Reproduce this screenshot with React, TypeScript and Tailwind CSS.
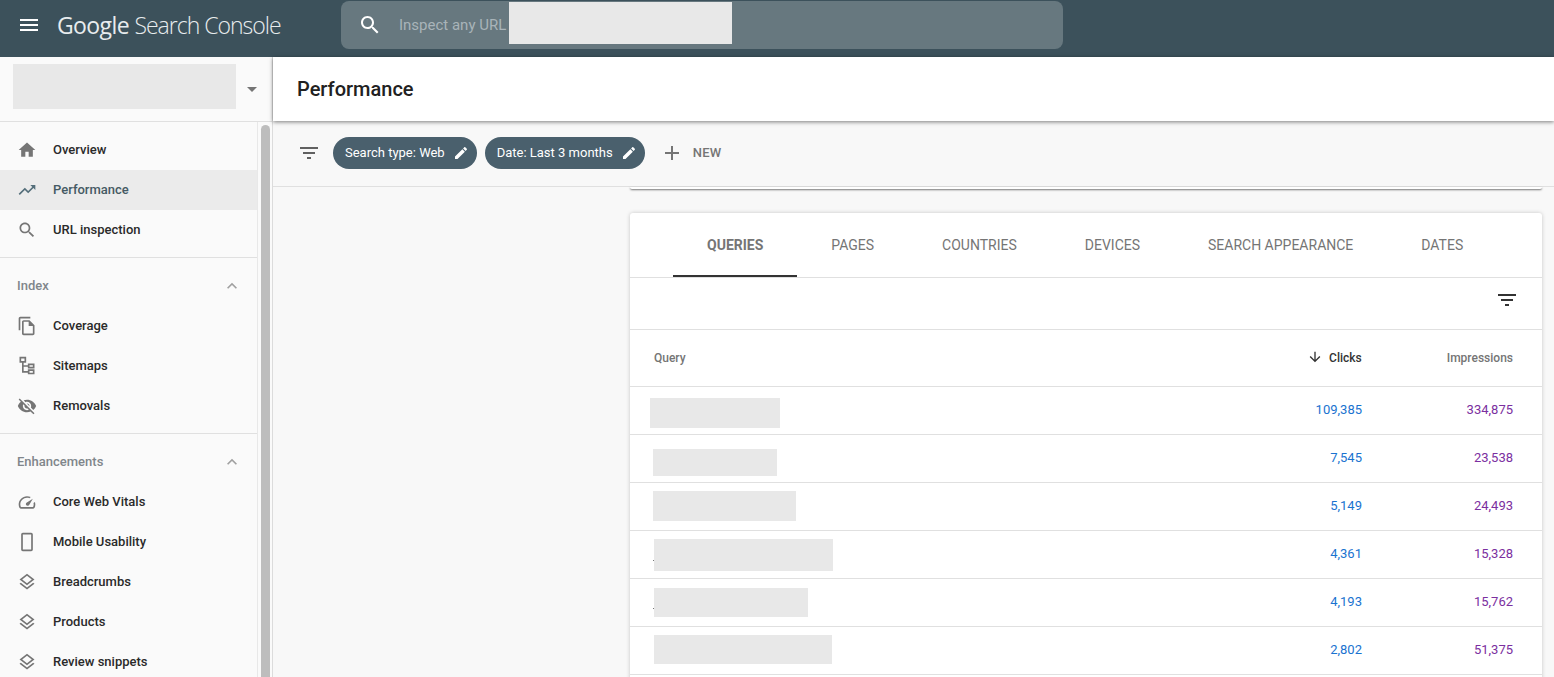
import React from 'react'

const P = {
  menu: 'M3 18h18v-2H3v2zm0-5h18v-2H3v2zm0-7v2h18V6H3z',
  search: 'M15.5 14h-.79l-.28-.27C15.41 12.59 16 11.11 16 9.5 16 5.91 13.09 3 9.5 3S3 5.91 3 9.5 5.91 16 9.5 16c1.61 0 3.09-.59 4.23-1.57l.27.28v.79l5 4.99L20.49 19l-4.99-5zm-6 0C7.01 14 5 11.99 5 9.5S7.01 5 9.5 5 14 7.01 14 9.5 11.99 14 9.5 14z',
  home: 'M10 20v-6h4v6h5v-8h3L12 3 2 12h3v8z',
  trend: 'M16 6l2.29 2.29-4.88 4.88-4-4L2 16.59 3.41 18l6-6 4 4 6.3-6.29L22 12V6z',
  filter: 'M10 18h4v-2h-4v2zM3 6v2h18V6H3zm3 7h12v-2H6v2z',
  edit: 'M3 17.25V21h3.75L17.81 9.94l-3.75-3.75L3 17.25zM20.71 7.04c.39-.39.39-1.02 0-1.41l-2.34-2.34c-.39-.39-1.02-.39-1.41 0l-1.83 1.83 3.75 3.75 1.83-1.83z',
  add: 'M19 13h-6v6h-2v-6H5v-2h6V5h2v6h6v2z',
  less: 'M12 8l-6 6 1.41 1.41L12 10.83l4.59 4.58L18 14z',
  copy: 'M16 1H4c-1.1 0-2 .9-2 2v14h2V3h12V1zm-1 4H8c-1.1 0-1.99.9-1.99 2L6 21c0 1.1.89 2 1.99 2H19c1.1 0 2-.9 2-2V11l-6-6zM8 21V7h6v5h5v9H8z',
  sitemap: 'M3 1h8v7H8v3h5V9h8v6h-8v-2H8v5h5v-2h8v6h-8v-2H6V8H3V1zM5 3v3h4V3H5zM15 11v2h4v-2h-4zM15 18v2h4v-2h-4z',
  eyeOff: 'M12 7c2.76 0 5 2.24 5 5 0 .65-.13 1.26-.36 1.83l2.92 2.92c1.51-1.26 2.7-2.89 3.43-4.75-1.73-4.39-6-7.5-11-7.5-1.4 0-2.74.25-3.98.7l2.16 2.16C10.74 7.13 11.35 7 12 7zM2 4.27l2.28 2.28.46.46C3.08 8.3 1.78 10.02 1 12c1.73 4.39 6 7.5 11 7.5 1.55 0 3.03-.3 4.38-.84l.42.42L19.73 22 21 20.73 3.27 3 2 4.27zM7.53 9.8l1.55 1.55c-.05.21-.08.43-.08.65 0 1.66 1.34 3 3 3 .22 0 .44-.03.65-.08l1.55 1.55c-.67.33-1.41.53-2.2.53-2.76 0-5-2.24-5-5 0-.79.2-1.53.53-2.2zm4.31-.78l3.15 3.15.02-.16c0-1.66-1.34-3-3-3l-.17.01z',
  gauge: 'M12 5C6.5 5 2 9.5 2 15c0 1.5.3 2.8.9 4 .3.6.9 1 1.6 1h15c.7 0 1.3-.4 1.6-1 .6-1.2.9-2.5.9-4 0-1-.2-2-.5-3l-1.7 1.1c.1.6.2 1.2.2 1.9 0 1.2-.3 2.2-.7 3H4.7c-.4-.8-.7-1.8-.7-3 0-4.4 3.6-8 8-8 1 0 2 .2 2.9.5L16.5 6c-1.4-.6-2.9-1-4.5-1zm7 3l-7.2 4.6c-1.2.7-1.5 2-.9 3 .6 1 2 1.3 3 .6.3-.2.5-.4.7-.7L19 8z',
  phone: 'M17 1.01 7 1C5.9 1 5 1.9 5 3v18c0 1.1.9 2 2 2h10c1.1 0 2-.9 2-2V3c0-1.1-.9-1.99-2-1.99zM17 21H7V3h10v18z',
  layers: 'M11.99 18.54l-7.37-5.73L3 14.07l9 7 9-7-1.63-1.27-7.38 5.74zM12 16l7.36-5.73L21 9l-9-7-9 7 1.63 1.27L12 16zm0-11.47L17.74 9 12 13.47 6.26 9 12 4.53z',
  down: 'M20 12l-1.41-1.41L13 16.17V4h-2v12.17l-5.58-5.6L4 12l8 8 8-8z',
}

function Icon({ d, className }: { d: string; className?: string }) {
  return (
    <svg viewBox="0 0 24 24" className={className} fill="currentColor" aria-hidden="true">
      <path d={d} />
    </svg>
  )
}

function NavItem({ icon, label, active }: { icon: string; label: string; active?: boolean }) {
  return (
    <div className={`h-10 flex items-center pl-[15px] ${active ? 'bg-[#ebebeb] text-[#455a64]' : 'text-[#2a2a2a]'}`}>
      <Icon d={icon} className={`w-6 h-6 p-[2px] ${active ? 'text-[#546e7a]' : 'text-[#757575]'}`} />
      <span className="ml-[14px] text-[13px] font-medium">{label}</span>
    </div>
  )
}

function NavHeader({ label }: { label: string }) {
  return (
    <div className="h-[48px] pt-2 flex items-center justify-between pl-[17px] pr-[13px] text-[13px] font-medium text-[#80868b]">
      <span>{label}</span>
      <Icon d={P.less} className="w-[24px] h-[24px] p-[2px] text-[#a0a0a0]" />
    </div>
  )
}

function Chip({ label }: { label: string }) {
  return (
    <div className="h-8 flex items-center rounded-full bg-[#4a606d] text-white pl-3 pr-2 text-[13px]">
      <span>{label}</span>
      <Icon d={P.edit} className="w-4 h-4 ml-2" />
    </div>
  )
}

const tabs = ['QUERIES', 'PAGES', 'COUNTRIES', 'DEVICES', 'SEARCH APPEARANCE', 'DATES']

const rows = [
  { box: 'ml-[20px] mt-[11px] w-[130px] h-[30px]', clicks: '109,385', imp: '334,875' },
  { box: 'ml-[23px] mt-[14px] w-[124px] h-[27px]', clicks: '7,545', imp: '23,538' },
  { box: 'ml-[23px] mt-[8px] w-[143px] h-[30px]', clicks: '5,149', imp: '24,493' },
  { box: 'mt-[8px] w-[179px] h-[32px]', clicks: '4,361', imp: '15,328', dot: true },
  { box: 'mt-[9px] w-[154px] h-[29px]', clicks: '4,193', imp: '15,762', dot: true },
  { box: 'ml-[24px] mt-[8px] w-[178px] h-[29px]', clicks: '2,802', imp: '51,375' },
]

export default function App() {
  return (
    <div className="h-[677px] overflow-hidden flex flex-col bg-[#f8f8f8] font-['Roboto',sans-serif]">
      {/* top bar */}
      <header className="h-[57px] shrink-0 bg-[#3c515b] flex items-start">
        <Icon d={P.menu} className="w-6 h-6 ml-[17px] mt-[13px] text-white" />
        <div className="ml-[16px] mt-[9px] w-[230px] text-[23px] leading-[32px] tracking-[-0.6px] text-[#e8ecee] font-['Open_Sans',sans-serif] whitespace-nowrap">
          <span>Google</span> <span className="font-light tracking-[-1px]">Search Console</span>
        </div>
        <div className="ml-[54px] mt-[1px] w-[722px] h-[48px] rounded-lg bg-[#67787f] flex items-start">
          <Icon d={P.search} className="w-6 h-6 ml-[17px] mt-[12px] text-white" />
          <span className="ml-[17px] mt-[12px] text-[15px] leading-6 text-[#a9b4b9] whitespace-nowrap">Inspect any URL</span>
          <div className="ml-[3px] mt-[1px] w-[223px] h-[42px] bg-[#e8e8e8]" />
        </div>
      </header>

      <div className="flex-1 flex min-h-0">
        {/* sidebar */}
        <aside className="w-[273px] shrink-0 bg-[#fafafa] border-r border-[#dcdcdc] flex flex-col">
          <div className="h-[65px] shrink-0 border-b border-[#e0e0e0] flex items-start">
            <div className="ml-[13px] mt-[7px] w-[223px] h-[45px] bg-[#e8e8e8]" />
            <div className="ml-[11px] mt-[30px] w-0 h-0 border-x-[5px] border-x-transparent border-t-[5px] border-t-[#757575]" />
          </div>
          <div className="flex-1 flex min-h-0">
            <nav className="w-[258px] shrink-0 border-r border-[#e8e8e8] pt-2">
              <div className="border-b border-[#e0e0e0] pb-[7px]">
                <NavItem icon={P.home} label="Overview" />
                <NavItem icon={P.trend} label="Performance" active />
                <NavItem icon={P.search} label="URL inspection" />
              </div>
              <div className="border-b border-[#e0e0e0] pb-[7px]">
                <NavHeader label="Index" />
                <NavItem icon={P.copy} label="Coverage" />
                <NavItem icon={P.sitemap} label="Sitemaps" />
                <NavItem icon={P.eyeOff} label="Removals" />
              </div>
              <NavHeader label="Enhancements" />
              <NavItem icon={P.gauge} label="Core Web Vitals" />
              <NavItem icon={P.phone} label="Mobile Usability" />
              <NavItem icon={P.layers} label="Breadcrumbs" />
              <NavItem icon={P.layers} label="Products" />
              <NavItem icon={P.layers} label="Review snippets" />
            </nav>
            <div className="flex-1 pt-[3px] pl-[3px]">
              <div className="w-[9px] h-full rounded-t-[5px] bg-[#bdbdbd]" />
            </div>
          </div>
        </aside>

        {/* main */}
        <main className="flex-1 min-w-0 flex flex-col">
          <div className="relative z-10 h-[64px] shrink-0 bg-white shadow-[0_1px_4px_rgba(0,0,0,0.5)] flex items-center pl-6">
            <h1 className="text-[20px] font-medium text-[#212121]">Performance</h1>
          </div>
          <div className="h-[66px] shrink-0 border-b border-[#e0e0e0] flex items-center pl-6 pb-[1px]">
            <Icon d={P.filter} className="w-6 h-6 text-[#616161]" />
            <div className="ml-3 flex gap-2">
              <Chip label="Search type: Web" />
              <Chip label="Date: Last 3 months" />
            </div>
            <Icon d={P.add} className="w-6 h-6 ml-[15px] text-[#757575]" />
            <span className="ml-[9px] text-[13px] font-medium text-[#757575] tracking-[0.2px]">NEW</span>
          </div>

          <div className="flex-1 min-h-0 pl-[357px] pr-3">
            {/* bottom edge of the card above */}
            <div className="h-[2px] rounded-b-sm bg-white shadow-[0_1px_2px_rgba(0,0,0,0.55)]" />
            <section className="mt-[24px] rounded-t-[3px] bg-white shadow-[0_0_4px_rgba(0,0,0,0.2)]">
              <div className="h-[65px] border-b border-[#e0e0e0] flex pl-[43px]">
                {tabs.map((t, i) => (
                  <div
                    key={t}
                    className={`h-[64px] px-[34px] flex items-center text-[14px] whitespace-nowrap text-[#757575] ${i === 0 ? 'font-bold border-b-2 border-[#333333] pt-[2px]' : ''}`}
                  >
                    {t}
                  </div>
                ))}
              </div>
              <div className="h-[52px] border-b border-[#e0e0e0] flex items-start justify-end pr-[23px] pt-[10px]">
                <Icon d={P.filter} className="w-6 h-6 text-[#333333]" />
              </div>
              <div className="h-[57px] border-b border-[#e0e0e0] flex items-center text-[12px] font-medium text-[#757575]">
                <span className="ml-6 flex-1">Query</span>
                <Icon d={P.down} className="w-4 h-4 mr-[6px] mb-[2px] text-[#333333]" />
                <span className="text-[#333333]">Clicks</span>
                <span className="ml-[85px] mr-[29px]">Impressions</span>
              </div>
              {rows.map((r) => (
                <div key={r.clicks} className="h-12 border-b border-[#e0e0e0] flex items-start text-[13px]">
                  {r.dot && <div className="ml-[23px] mt-[29px] w-px h-px bg-[#777777]" />}
                  <div className={`${r.box} bg-[#e8e8e8]`} />
                  <span className="ml-auto self-center pb-[2px] text-[#1a73d0]">{r.clicks}</span>
                  <span className="w-[180px] pr-[29px] pb-[2px] text-right self-center text-[#7b2fa0]">{r.imp}</span>
                </div>
              ))}
              <div className="h-12" />
            </section>
          </div>
        </main>
      </div>
    </div>
  )
}
